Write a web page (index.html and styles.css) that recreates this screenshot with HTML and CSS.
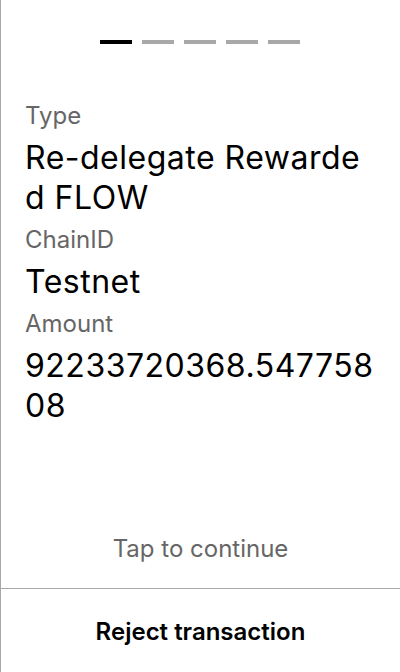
FILE: index.html
```html
<!DOCTYPE html>
<html>
<head>
<meta charset="utf-8">
<link rel="stylesheet" href="styles.css">
</head>
<body>
<div class="screen">
  <div class="progress">
    <span class="bar active"></span>
    <span class="bar"></span>
    <span class="bar"></span>
    <span class="bar"></span>
    <span class="bar"></span>
  </div>
  <div class="content">
    <div class="label">Type</div>
    <div class="value">Re-delegate Rewarded FLOW</div>
    <div class="label">ChainID</div>
    <div class="value">Testnet</div>
    <div class="label">Amount</div>
    <div class="value">92233720368.54775808</div>
  </div>
  <div class="tap">Tap to continue</div>
  <div class="footer">Reject transaction</div>
</div>
</body>
</html>
```

FILE: styles.css
```css
* { box-sizing: border-box; }
html, body { margin: 0; padding: 0; background: #fff; }
body { font-family: Inter, "Noto Sans", sans-serif; color: #000; }
.screen {
  width: 400px;
  height: 672px;
  border-left: 1px solid #a8a8a8;
  display: flex;
  flex-direction: column;
}
.progress {
  display: flex;
  justify-content: center;
  gap: 10px;
  padding-top: 40px;
  padding-right: 1px;
}
.bar {
  width: 32px;
  height: 4px;
  background: #a8a8a8;
}
.bar.active { background: #000; }
.content {
  flex: 1;
  display: flex;
  flex-direction: column;
  gap: 6px;
  padding: 56px 26px 0 24px;
}
.label {
  font-size: 24px;
  line-height: 32px;
  color: #666;
}
.value {
  font-size: 32px;
  line-height: 40px;
  letter-spacing: 0.5px;
  color: #000;
  word-break: break-all;
}
.tap {
  text-align: center;
  font-size: 24px;
  line-height: 32px;
  color: #666;
  padding-bottom: 23px;
}
.footer {
  border-top: 1px solid #a8a8a8;
  height: 84px;
  padding-top: 2px;
  display: flex;
  align-items: center;
  justify-content: center;
  font-size: 24px;
  font-weight: 600;
}
```
